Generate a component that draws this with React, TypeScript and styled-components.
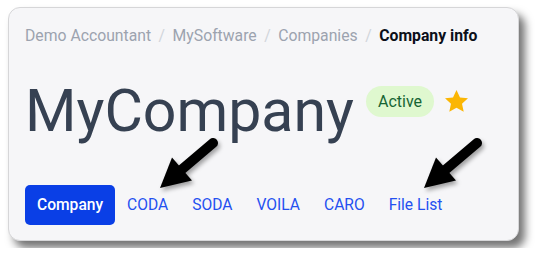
import React from "react";
import styled, { createGlobalStyle } from "styled-components";

const Global = createGlobalStyle`
  html, body { margin: 0; padding: 0; background: #ffffff; }
  body { padding: 7px 8px; font-family: Roboto, "Liberation Sans", sans-serif; }
`;

const Card = styled.div`
  position: relative;
  width: 511px;
  height: 234px;
  box-sizing: border-box;
  background: #f6f6f8;
  border: 1px solid #d6d6d8;
  border-radius: 12px;
  box-shadow: 6px 7px 9px rgba(0, 0, 0, 0.55);
  padding: 16px 16px 0 16px;
`;

const Breadcrumb = styled.nav`
  display: flex;
  align-items: center;
  font-size: 15.75px;
  line-height: 24px;
  color: #9ca3af;
`;

const Crumb = styled.span<{ $current?: boolean }>`
  color: ${(p) => (p.$current ? "#0b0f19" : "#9ca3af")};
  font-weight: ${(p) => (p.$current ? 700 : 400)};
`;

const Sep = styled.span`
  color: #d1d5db;
  margin: 0 7.5px;
`;

const Header = styled.div`
  display: flex;
  align-items: flex-start;
  margin-top: 34px;
`;

const Title = styled.h1`
  margin: 0;
  font-size: 59px;
  line-height: 58px;
  font-weight: 400;
  color: #364152;
  letter-spacing: 0;
`;

const Badge = styled.span`
  margin-left: 12px;
  margin-top: 4px;
  height: 31px;
  padding: 0 12px;
  border-radius: 16px;
  background: #dff8cf;
  color: #166534;
  font-size: 16px;
  line-height: 31px;
`;

const Star = styled.svg`
  margin-left: 9px;
  margin-top: 6px;
  width: 27px;
  height: 27px;
`;

const Tabs = styled.div`
  display: flex;
  align-items: center;
  margin-top: 45px;
`;

const Tab = styled.span<{ $active?: boolean }>`
  height: 40px;
  display: flex;
  align-items: center;
  padding: 0 12px;
  border-radius: 5px;
  font-size: 15.6px;
  background: ${(p) => (p.$active ? "#0a3fe6" : "transparent")};
  color: ${(p) => (p.$active ? "#ffffff" : "#2450f0")};
  font-weight: ${(p) => (p.$active ? 500 : 400)};
`;

const ArrowSvg = styled.svg<{ $left: number; $top: number }>`
  position: absolute;
  left: ${(p) => p.$left}px;
  top: ${(p) => p.$top}px;
  width: 75px;
  height: 65px;
  overflow: visible;
  filter: drop-shadow(2px 3px 2px rgba(0, 0, 0, 0.35));
`;

const Arrow = ({ left, top }: { left: number; top: number }) => (
  <ArrowSvg $left={left} $top={top} viewBox="0 0 75 65">
    <line x1="63" y1="11" x2="30" y2="39" stroke="#000" strokeWidth="10" strokeLinecap="round" />
    <polygon points="10,56 22,25.5 42,48.5" fill="#000" />
  </ArrowSvg>
);

export default function App() {
  return (
    <>
      <Global />
      <Card>
        <Breadcrumb>
          <Crumb>Demo Accountant</Crumb>
          <Sep>/</Sep>
          <Crumb>MySoftware</Crumb>
          <Sep>/</Sep>
          <Crumb>Companies</Crumb>
          <Sep>/</Sep>
          <Crumb $current>Company info</Crumb>
        </Breadcrumb>
        <Header>
          <Title>MyCompany</Title>
          <Badge>Active</Badge>
          <Star viewBox="0 0 24 24">
            <path
              d="M12 1.8l3.1 6.6 7.1.8-5.3 4.9 1.5 7.1L12 17.6l-6.4 3.6 1.5-7.1L1.8 9.2l7.1-.8z"
              fill="#fbb604"
            />
          </Star>
        </Header>
        <Tabs>
          <Tab $active>Company</Tab>
          <Tab>CODA</Tab>
          <Tab>SODA</Tab>
          <Tab>VOILA</Tab>
          <Tab>CARO</Tab>
          <Tab>File List</Tab>
        </Tabs>
        <Arrow left={141} top={124} />
        <Arrow left={405} top={124} />
      </Card>
    </>
  );
}
